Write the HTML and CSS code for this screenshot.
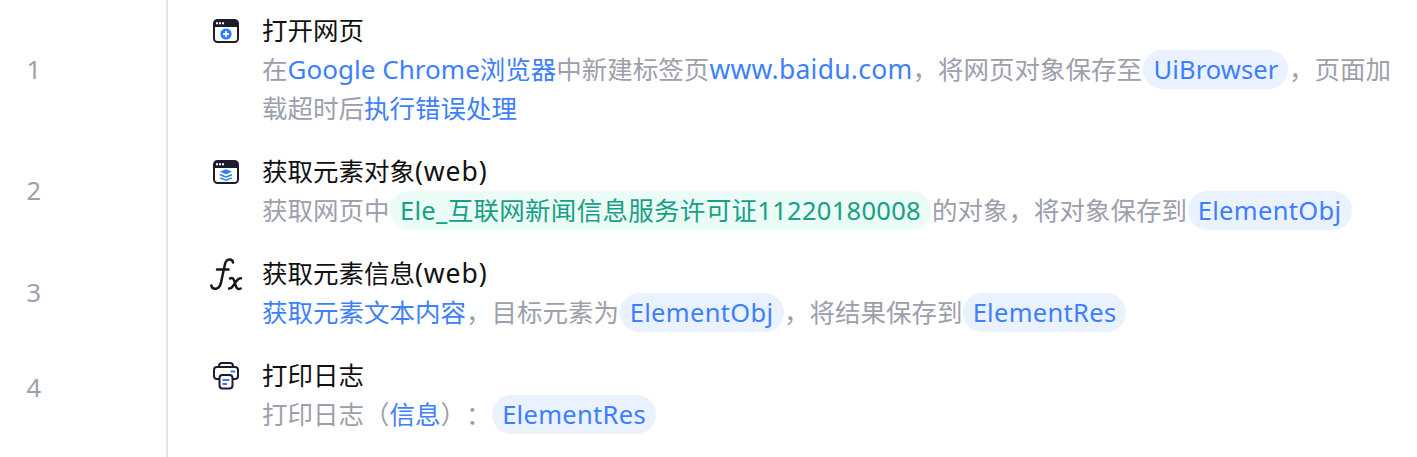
FILE: index.html
```html
<!DOCTYPE html>
<html lang="zh-CN">
<head>
<meta charset="utf-8">
<title>流程</title>
<link rel="stylesheet" href="styles.css">
</head>
<body>
<main class="flow">
  <section class="step step-tall">
    <div class="num">1</div>
    <div class="body">
      <svg class="icon" viewBox="0 0 36 36"><rect x="6" y="6" width="24" height="22" rx="3.5" fill="#fff" stroke="#1f1b2e" stroke-width="2"/><path d="M6 13V9.500a3.500 3.500 0 0 1 3.500-3.500h17a3.500 3.500 0 0 1 3.500 3.500V13z" fill="#1f1b2e"/><path d="M8 8.200h2v2H8zm3 0h2v2h-2zm3 0h2v2h-2z" fill="#fff"/><circle cx="18" cy="20" r="5.600" fill="#2b7fff"/><path d="M18 17v6M15 20h6" stroke="#fff" stroke-width="1.800"/></svg>
      <div class="text">
        <h2 class="title">打开网页</h2>
        <p class="desc">在<b class="link chrome">Google Chrome</b><b class="link">浏览器</b>中新建标签页<b class="link url">www.baidu.com</b>，将网页对象保存至<b class="pill browser">UiBrowser</b>，页面加载超时后<b class="link">执行错误处理</b></p>
      </div>
    </div>
  </section>
  <section class="step">
    <div class="num">2</div>
    <div class="body">
      <svg class="icon" viewBox="0 0 36 36"><rect x="6" y="6" width="24" height="22" rx="3.500" fill="#fff" stroke="#1f1b2e" stroke-width="2"/><path d="M6 13V9.500a3.500 3.500 0 0 1 3.500-3.500h17a3.500 3.500 0 0 1 3.500 3.500V13z" fill="#1f1b2e"/><path d="M8 8.200h2v2H8zm3 0h2v2h-2zm3 0h2v2h-2z" fill="#fff"/><path d="M18 14.200l6 2.500-6 2.500-6-2.500z" fill="#2b7fff"/><path d="M12 19.700l6 2.200 6-2.200M12 22.900l6 2.200 6-2.200" fill="none" stroke="#2b7fff" stroke-width="1.500"/></svg>
      <div class="text">
        <h2 class="title">获取元素对象<span class="web">(web)</span></h2>
        <p class="desc">获取网页中<b class="pill element">Ele_互联网新闻信息服务许可证11220180008</b>的对象，将对象保存到<b class="pill wide">ElementObj</b></p>
      </div>
    </div>
  </section>
  <section class="step">
    <div class="num">3</div>
    <div class="body">
      <svg class="icon" viewBox="0 0 36 36"><g fill="none" stroke="#171717" stroke-width="2.500" stroke-linecap="round" stroke-linejoin="round"><path d="M25 5.500C24.500 1.500 18.500 1 17 7L13 25.500C11.500 33 4.500 33.500 3.300 28.500M9 12.500h11.500"/><path d="M22 21.500c3-1.300 3.700.5 4.700 3.500l1 3.500c.8 2.700 2 4.500 5 3M33 21.300c-2-.3-3 .7-4.500 2.700l-3.500 5c-1.200 1.700-2 3-4 2.500"/></g></svg>
      <div class="text">
        <h2 class="title">获取元素信息<span class="web">(web)</span></h2>
        <p class="desc"><b class="link">获取元素文本内容</b>，目标元素为<b class="pill wide">ElementObj</b>，将结果保存到<b class="pill">ElementRes</b></p>
      </div>
    </div>
  </section>
  <section class="step step-last">
    <div class="num">4</div>
    <div class="body">
      <svg class="icon" viewBox="0 0 36 36"><g fill="none" stroke="#1f1b2e" stroke-width="2" stroke-linejoin="round"><path d="M11 9V8a3 3 0 0 1 3-3h8a3 3 0 0 1 3 3v1"/><path d="M11 21H9a3 3 0 0 1-3-3v-6a3 3 0 0 1 3-3h18a3 3 0 0 1 3 3v6a3 3 0 0 1-3 3h-2"/><rect x="11.500" y="17" width="13" height="13.500" rx="3"/></g><path d="M22.500 13.500h4.500M14.500 22h7M14.500 26h4.500" stroke="#2b7fff" stroke-width="2"/></svg>
      <div class="text">
        <h2 class="title">打印日志</h2>
        <p class="desc">打印日志（<b class="link">信息</b>）：<b class="pill wide">ElementRes</b></p>
      </div>
    </div>
  </section>
</main>
</body>
</html>
```
FILE: styles.css
```css
* { box-sizing: border-box; }
body {
  margin: 0;
  height: 457px;
  overflow: hidden;
  background: #fff;
  font: 25.5px/39px "Noto Sans", "Noto Sans CJK SC", sans-serif;
  text-spacing-trim: space-all;
  color: #9c9fac;
}
.flow { display: flex; flex-direction: column; }
.step { display: flex; height: 102px; }
.step-tall { height: 140px; }
.step-last { height: 113px; }
.num {
  width: 168px;
  padding: 0 0 1px 26.5px;
  border-right: 2px solid #e5e5e5;
  display: flex;
  align-items: center;
}
.step-last .num { padding-bottom: 27px; }
.body { flex: 1; display: flex; padding: 12px 22px 0 40px; }
.step-tall .body { padding-top: 11px; }
.icon { width: 36px; height: 36px; flex: none; margin-top: 3px; }
.step-last .icon { margin-top: 2px; }
.text { flex: 1; margin-left: 18px; }
.title { margin: 0; font-size: inherit; font-weight: 400; color: #111; }
.desc { margin: 0; }
.link, .pill { font-weight: 400; color: #3d7fff; }
.chrome, .url, .web { line-height: 1; }
.chrome { font-size: 26px; letter-spacing: 0.030px; }
.url { font-size: 26.500px; letter-spacing: 0.250px; }
.web { font-size: 26.500px; letter-spacing: 0.900px; }
.pill {
  display: inline-block;
  vertical-align: top;
  width: 163px;
  height: 39px;
  margin: 0 0.500px;
  border-radius: 20px;
  background: #eaf2ff;
  text-align: center;
  white-space: nowrap;
  letter-spacing: 0.300px;
}
.pill.wide { width: 164px; }
.pill.browser { width: 145px; margin-left: 1.500px; letter-spacing: 0.100px; }
.pill.element { width: 541px; margin-right: 1px; color: #17a085; background: #ebfbf5; }
```
